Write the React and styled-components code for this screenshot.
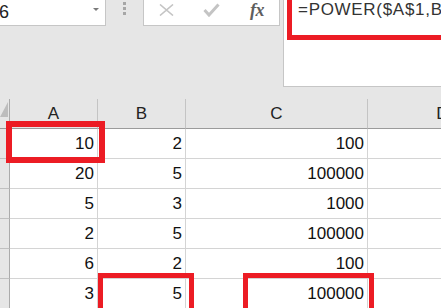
import React from "react";
import styled, { createGlobalStyle } from "styled-components";

const Global = createGlobalStyle`
  html, body { margin: 0; padding: 0; background: #e6e6e6; overflow: hidden; }
  body { width: 441px; height: 308px; font-family: "Liberation Sans", Arial, sans-serif; }
`;

const Page = styled.div`
  width: 441px;
  height: 308px;
  overflow: hidden;
  background: #e6e6e6;
  display: flex;
  flex-direction: column;
`;

const TopBar = styled.div`
  display: flex;
  align-items: flex-start;
  height: 99px;
  flex: none;
`;

const NameBox = styled.div`
  flex: none;
  margin-left: -20px;
  width: 113px;
  height: 25px;
  background: #fff;
  border-right: 1px solid #c6c6c6;
  border-bottom: 1px solid #c6c6c6;
  display: flex;
  align-items: center;
  justify-content: space-between;
  padding: 0 6px 0 6px;
  box-sizing: content-box;
  font-size: 18px;
  color: #222;
  overflow: hidden;
`;

const NameText = styled.span`
  white-space: nowrap;
  line-height: 25px;
`;

const Caret = styled.span`
  width: 0;
  height: 0;
  border-left: 3px solid transparent;
  border-right: 3px solid transparent;
  border-top: 3px solid #7a7a7a;
  margin-top: -7px;
`;

const Grip = styled.div`
  flex: none;
  width: 37px;
  height: 26px;
  display: flex;
  flex-direction: column;
  padding: 2px 0 0 17px;
  box-sizing: border-box;
  gap: 2px;
`;

const GripDot = styled.span`
  width: 3px;
  height: 3px;
  background: #a6a6a6;
`;

const ButtonBox = styled.div`
  flex: none;
  width: 135px;
  height: 25px;
  background: #fff;
  border-left: 1px solid #c6c6c6;
  border-right: 1px solid #c6c6c6;
  border-bottom: 1px solid #c6c6c6;
  display: flex;
  box-sizing: content-box;
  margin-right: 3px;
`;

const IconCell = styled.div`
  width: ${(p) => p.$w}px;
  height: 25px;
  display: flex;
  align-items: flex-start;
  justify-content: center;
  padding-top: ${(p) => p.$top || 0}px;
  box-sizing: border-box;
`;

const Fx = styled.span`
  font-family: "Liberation Serif", "Times New Roman", serif;
  font-style: italic;
  font-weight: bold;
  font-size: 18px;
  color: #5e5e5e;
  line-height: 17px;
  letter-spacing: -0.5px;
`;

const FormulaBar = styled.div`
  position: relative;
  flex: 1;
  min-width: 0;
  height: 86px;
  background: #fff;
  border-left: 1px solid #c6c6c6;
  border-bottom: 1px solid #c6c6c6;
  padding: 0 0 0 14px;
`;

const FormulaText = styled.div`
  font-size: 17px;
  letter-spacing: 0.7px;
  line-height: 20px;
  color: #333;
  white-space: nowrap;
`;

const Mark = styled.div`
  position: absolute;
  left: ${(p) => p.$x}px;
  top: ${(p) => p.$y}px;
  width: ${(p) => p.$w}px;
  height: ${(p) => p.$h}px;
  border: ${(p) => p.$t}px solid #ec1c24;
  box-sizing: border-box;
  pointer-events: none;
`;

const Sheet = styled.div`
  position: relative;
  display: grid;
  grid-template-columns: 10px 88px 88px 182px 150px;
  grid-auto-rows: 30px;
  flex: none;
`;

const Corner = styled.div`
  border-right: 1px solid #ababab;
  border-bottom: 1px solid #9b9b9b;
  display: flex;
  align-items: flex-start;
  padding-top: 3px;
`;

const ColHead = styled.div`
  border-right: 1px solid #c4c4c4;
  border-bottom: 1px solid #9b9b9b;
  display: flex;
  align-items: center;
  justify-content: center;
  font-size: 17px;
  color: #222;
  box-sizing: border-box;
  padding-top: 1px;
`;

const RowHead = styled.div`
  background: #e6e6e6;
  border-right: 1px solid #ababab;
  border-bottom: 1px solid #c0c0c0;
  box-sizing: border-box;
`;

const Cell = styled.div`
  background: #fff;
  border-right: 1px solid #d4d4d4;
  border-bottom: 1px solid #d4d4d4;
  box-sizing: border-box;
  display: flex;
  align-items: center;
  justify-content: flex-end;
  padding-right: 3px;
  font-size: 17px;
  color: #111;
`;

const rows = [
  [10, 2, 100],
  [20, 5, 100000],
  [5, 3, 1000],
  [2, 5, 100000],
  [6, 2, 100],
  [3, 5, 100000],
];

export default function App() {
  return (
    <Page>
      <Global />
      <TopBar>
        <NameBox>
          <NameText>C6</NameText>
          <Caret />
        </NameBox>
        <Grip>
          <GripDot />
          <GripDot />
          <GripDot />
        </Grip>
        <ButtonBox>
          <IconCell $w={44} $top={4}>
            <svg width="15" height="12" viewBox="0 0 15 12">
              <path d="M1 0.5 L14 11.5 M14 0.5 L1 11.5" stroke="#c4c4c4" strokeWidth="1.6" fill="none" />
            </svg>
          </IconCell>
          <IconCell $w={47} $top={3}>
            <svg width="17" height="14" viewBox="0 0 17 14">
              <path d="M1.5 7 L6 12 L15.5 1.5" stroke="#c4c4c4" strokeWidth="3" fill="none" />
            </svg>
          </IconCell>
          <IconCell $w={44} $top={2}>
            <Fx>fx</Fx>
          </IconCell>
        </ButtonBox>
        <FormulaBar>
          <FormulaText>=POWER($A$1,B1)</FormulaText>
          <Mark $x={3} $y={-10} $w={170} $h={50} $t={5} />
        </FormulaBar>
      </TopBar>
      <Sheet>
        <Corner>
          <svg width="8" height="15" viewBox="0 0 8 15">
            <path d="M0 15 L8 15 L8 0 Z" fill="#bdbdbd" />
          </svg>
        </Corner>
        <ColHead>A</ColHead>
        <ColHead>B</ColHead>
        <ColHead>C</ColHead>
        <ColHead>D</ColHead>
        {rows.map((r, i) => (
          <React.Fragment key={i}>
            <RowHead />
            <Cell>{r[0]}</Cell>
            <Cell>{r[1]}</Cell>
            <Cell>{r[2]}</Cell>
            <Cell />
          </React.Fragment>
        ))}
        <Mark $x={6} $y={22} $w={99} $h={42} $t={6} />
        <Mark $x={98} $y={174} $w={96} $h={40} $t={5} />
        <Mark $x={243} $y={174} $w={131} $h={40} $t={5} />
      </Sheet>
    </Page>
  );
}
